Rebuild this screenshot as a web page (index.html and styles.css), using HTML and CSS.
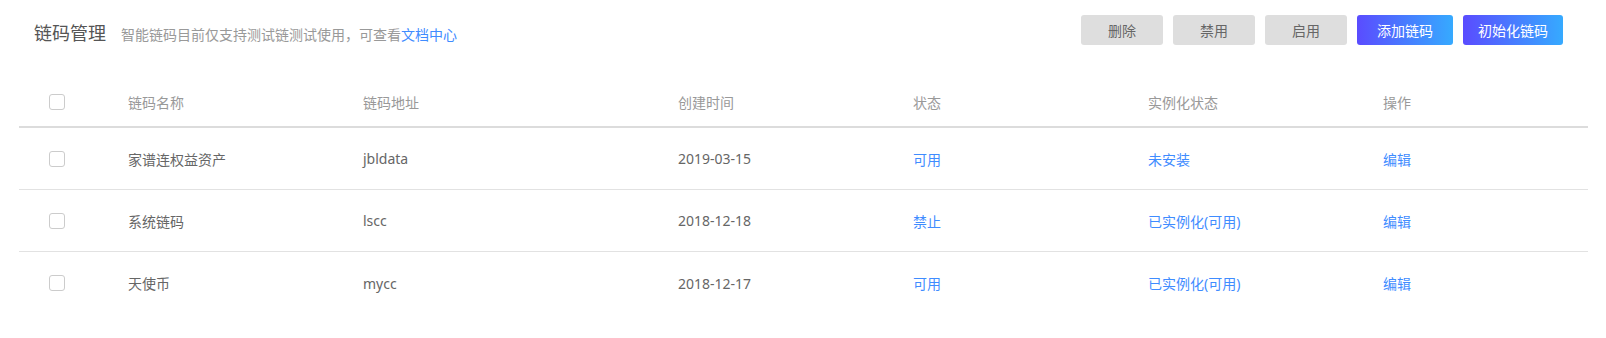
FILE: index.html
```html
<!DOCTYPE html>
<html>
<head>
    <meta charset="UTF-8">
    <title>链码管理</title>
    <link rel="stylesheet" href="styles.css">
</head>
<body>
    <div class="page">
        <div class="toolbar">
            <div class="title-box">
                <h2 class="title">链码管理</h2>
                <span class="tip">智能链码目前仅支持测试链测试使用，可查看<a class="link" href="#">文档中心</a></span>
            </div>
            <div class="actions">
                <button class="btn btn-gray">删除</button>
                <button class="btn btn-gray">禁用</button>
                <button class="btn btn-gray">启用</button>
                <button class="btn btn-blue btn-add">添加链码</button>
                <button class="btn btn-blue btn-init">初始化链码</button>
            </div>
        </div>

        <div class="table">
            <div class="row head">
                <div class="cell"><span class="checkbox"></span></div>
                <div class="cell">链码名称</div>
                <div class="cell">链码地址</div>
                <div class="cell">创建时间</div>
                <div class="cell">状态</div>
                <div class="cell">实例化状态</div>
                <div class="cell">操作</div>
            </div>
            <div class="row">
                <div class="cell"><span class="checkbox"></span></div>
                <div class="cell">家谱连权益资产</div>
                <div class="cell">jbldata</div>
                <div class="cell">2019-03-15</div>
                <div class="cell blue">可用</div>
                <div class="cell blue">未安装</div>
                <div class="cell blue">编辑</div>
            </div>
            <div class="row">
                <div class="cell"><span class="checkbox"></span></div>
                <div class="cell">系统链码</div>
                <div class="cell">lscc</div>
                <div class="cell">2018-12-18</div>
                <div class="cell blue">禁止</div>
                <div class="cell blue">已实例化(可用)</div>
                <div class="cell blue">编辑</div>
            </div>
            <div class="row last">
                <div class="cell"><span class="checkbox"></span></div>
                <div class="cell">天使币</div>
                <div class="cell">mycc</div>
                <div class="cell">2018-12-17</div>
                <div class="cell blue">可用</div>
                <div class="cell blue">已实例化(可用)</div>
                <div class="cell blue">编辑</div>
            </div>
        </div>
    </div>
</body>
</html>
```

FILE: styles.css
```css
* {
    margin: 0;
    padding: 0;
    box-sizing: border-box;
}

body {
    font-family: "Noto Sans", "Noto Sans CJK SC", sans-serif;
    background-color: #fff;
    color: #666;
}

.toolbar {
    display: flex;
    justify-content: space-between;
    align-items: center;
    padding: 14px 43px 0 34px;
}

.title-box {
    display: flex;
    align-items: baseline;
    margin-top: 5px;
}

.title {
    font-size: 18px;
    font-weight: normal;
    color: #555;
    margin-right: 15px;
}

.tip {
    font-size: 14px;
    color: #999;
}

.link {
    color: #3f8cff;
    text-decoration: none;
}

.actions {
    display: flex;
    gap: 10px;
}

.btn {
    height: 30px;
    border: none;
    border-radius: 3px;
    font-family: inherit;
    font-size: 14px;
    cursor: pointer;
}

.btn-gray {
    width: 82px;
    background-color: #dedede;
    color: #666;
}

.btn-blue {
    color: #fff;
    background: linear-gradient(to right, #5a4cff, #36aaff);
}

.btn-add {
    width: 96px;
}

.btn-init {
    width: 100px;
}

.table {
    margin: 32px 18px 0 19px;
}

.row {
    display: grid;
    grid-template-columns: 109px 235px 315px 235px 235px 235px 1fr;
    align-items: center;
    height: 62px;
    border-bottom: 1px solid #e2e2e2;
    font-size: 14px;
}

.row.head {
    height: 51px;
    border-bottom: 2px solid #dcdcdc;
    color: #999;
}

.row.last {
    border-bottom: none;
}

.cell .checkbox {
    display: block;
    width: 16px;
    height: 16px;
    margin-left: 30px;
    border: 1px solid #ccc;
    border-radius: 3px;
    background: #fff;
}

.blue {
    color: #3f8cff;
}
```
